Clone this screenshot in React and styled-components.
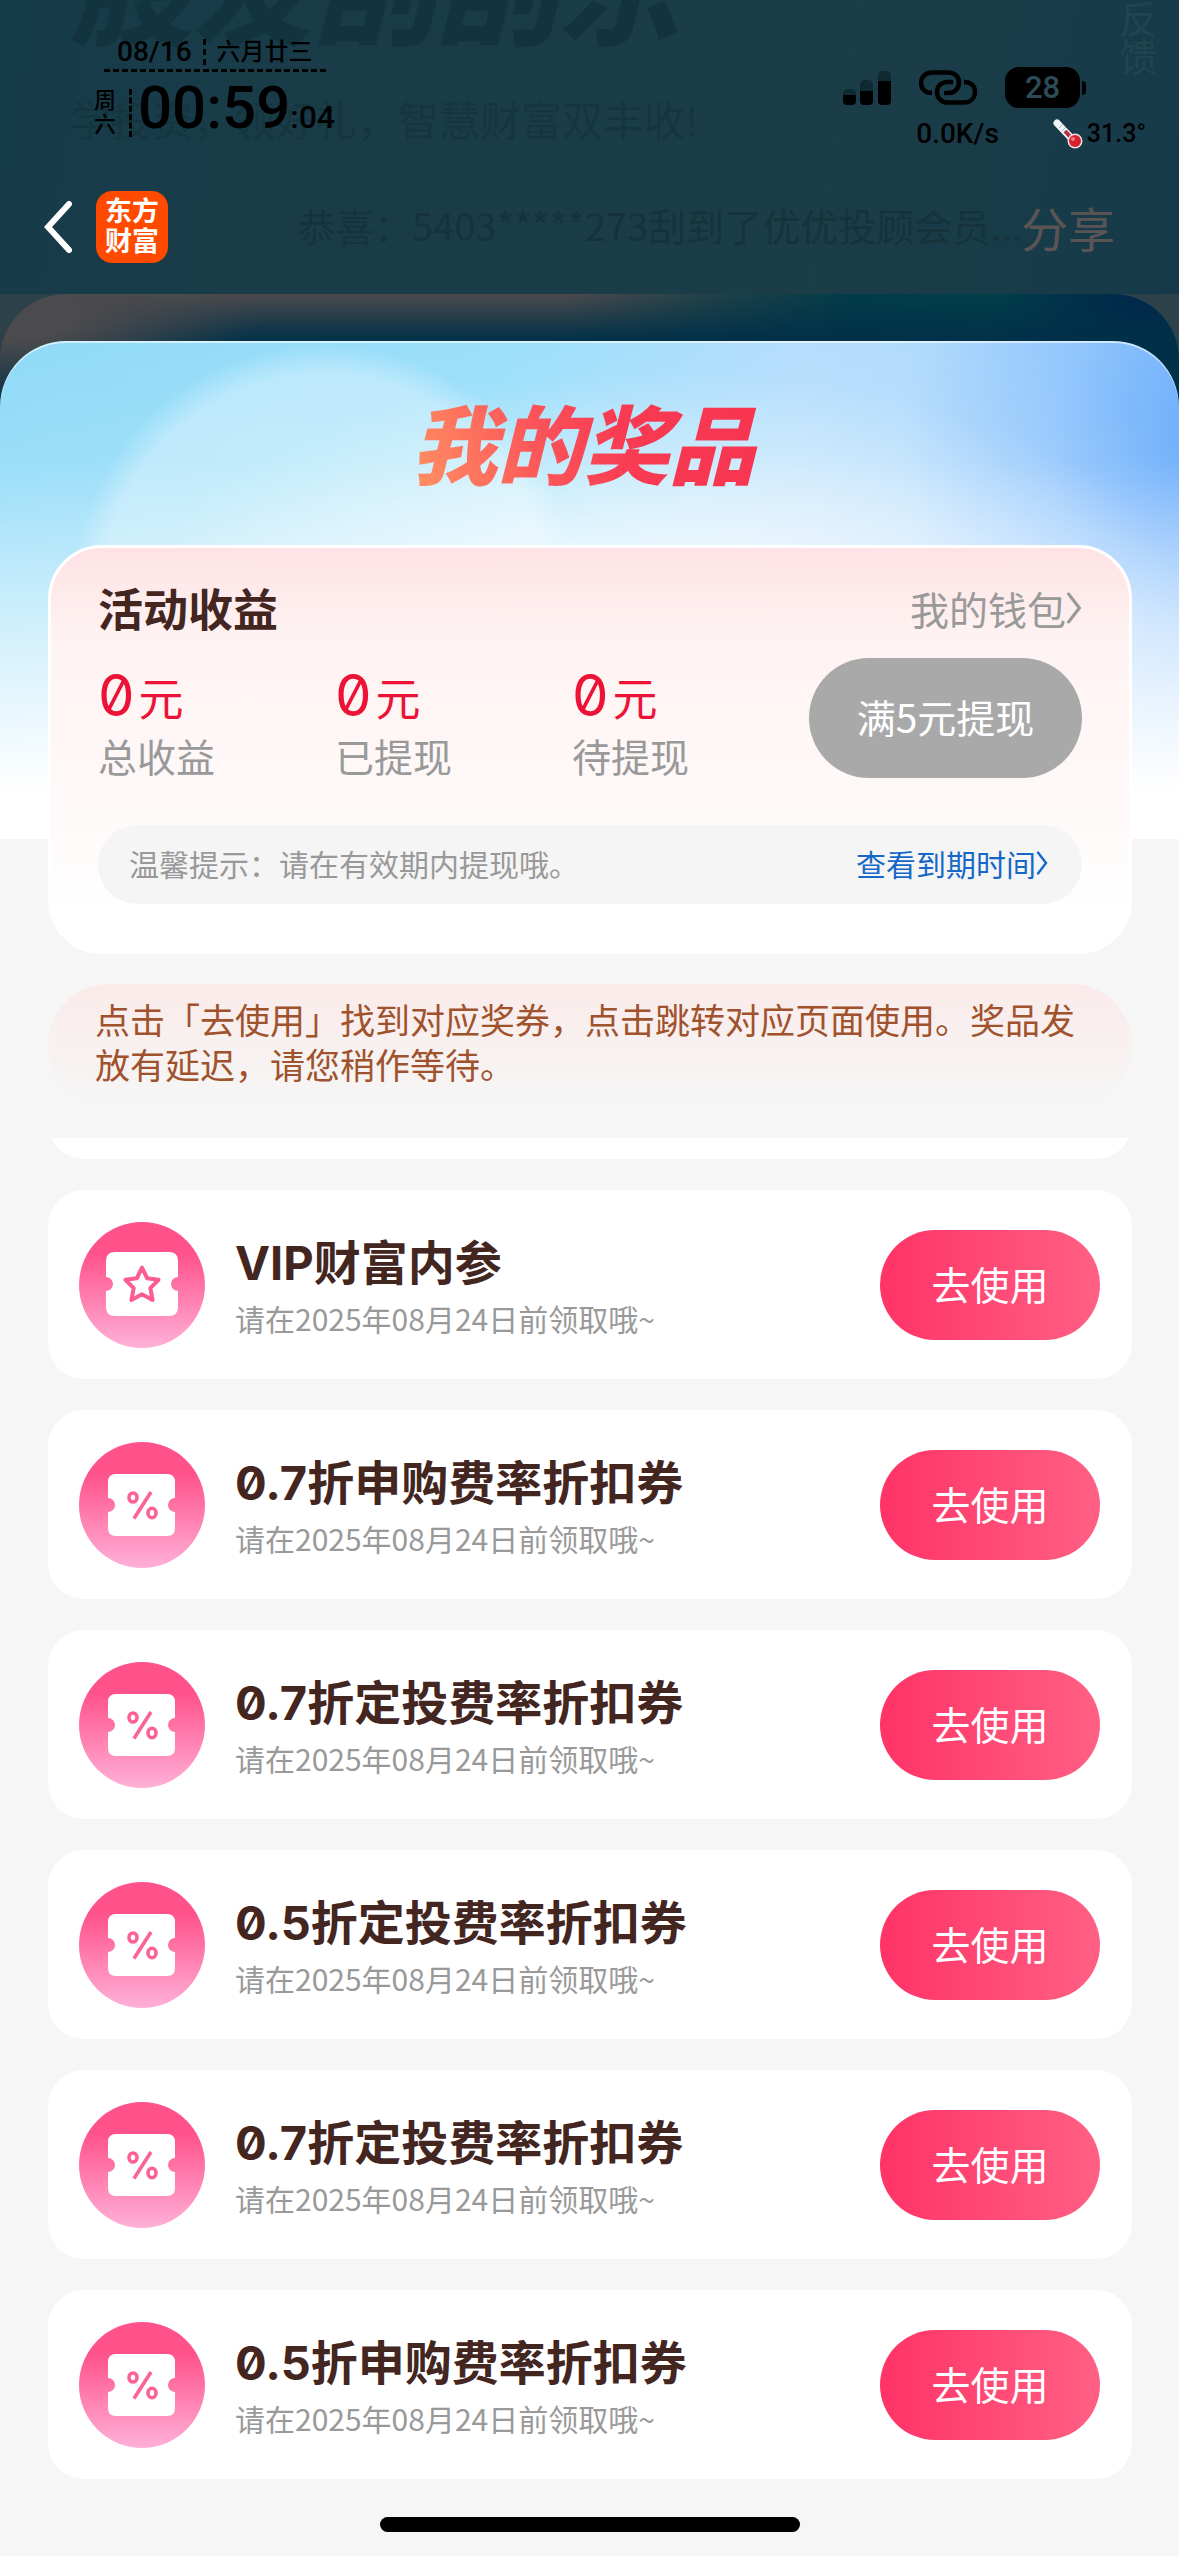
import React from 'react'
import styled, { createGlobalStyle } from 'styled-components'

const GlobalStyle = createGlobalStyle`
  * {
    box-sizing: border-box;
  }

  body {
    margin: 0;
    background: #f6f6f6;
    font-family: 'Noto Sans CJK SC', sans-serif;
  }

  h1, h2, h3, p, ul, dl, dd {
    margin: 0;
    padding: 0;
  }

  button {
    border: 0;
    padding: 0;
    font-family: inherit;
    cursor: pointer;
  }

  a {
    color: inherit;
    text-decoration: none;
  }
`

const Page = styled.div`
  background: #2c414a;
`

const Header = styled.header`
  display: grid;
  height: 294px;
  overflow: hidden;
  background: linear-gradient(100deg, #163b4a 0%, #1a3c48 30%, #1b3d48 70%, #163a4a 100%);
`

const Backdrop = styled.div`
  grid-area: 1 / 1;
  display: flex;
  justify-content: space-between;
  min-width: 0;
  padding: 0 22px 0 70px;
`

const BackdropTitle = styled.p`
  margin: -78px 0 0;
  font-size: 122px;
  line-height: 122px;
  font-weight: 900;
  font-style: italic;
  color: #13343f;
`

const BackdropSlogan = styled.p`
  margin-top: 54px;
  font-size: 41px;
  line-height: 41px;
  color: #16363f;
`

const BackdropNews = styled.p`
  margin: 64px 0 0 228px;
  font-size: 38px;
  line-height: 44px;
  white-space: nowrap;
  color: #16333c;
`

const Feedback = styled.span`
  writing-mode: vertical-rl;
  font-size: 38px;
  line-height: 38px;
  color: #21454f;
`

const Bars = styled.div`
  grid-area: 1 / 1;
  z-index: 1;
  display: flex;
  flex-direction: column;
  gap: 38px;
  padding: 34px 33px 0 44px;
`

const StatusBar = styled.div`
  display: flex;
  justify-content: space-between;
  height: 119px;
  padding-left: 50px;
  font-family: Roboto, 'Noto Sans CJK SC', sans-serif;
  font-weight: 500;
  color: #000;
`

const DateLine = styled.div`
  display: flex;
  align-items: center;
  gap: 11px;
  width: 222px;
  height: 38px;
  margin-left: 10px;
  padding-left: 13px;
  border-bottom: 3px dashed #000;
  font-size: 28px;
  line-height: 32px;
`

const Lunar = styled.span`
  padding-left: 11px;
  border-left: 3px dashed #000;
  font-size: 24px;
  line-height: 26px;
`

const ClockLine = styled.div`
  display: flex;
  align-items: center;
  gap: 6px;
  margin-top: 9px;
`

const Weekday = styled.span`
  width: 38px;
  padding-right: 14px;
  border-right: 3px dashed #000;
  font-size: 22px;
  line-height: 24px;
`

const Clock = styled.span`
  font-size: 60px;
  line-height: 54px;
  font-weight: 500;
`

const Seconds = styled.span`
  font-size: 32px;
`

const Indicators = styled.div`
  display: flex;
  flex-direction: column;
  align-items: flex-end;
  gap: 10px;
  padding-top: 33px;
`

const IndicatorRow = styled.div`
  display: flex;
  align-items: center;
  gap: ${props => props.$gap};
  padding-right: ${props => props.$inset || 0};
  font-size: 28px;
  line-height: 32px;
`

const Battery = styled.span`
  width: 75px;
  height: 41px;
  border-radius: 14px;
  background: #000;
  font-size: 31px;
  line-height: 41px;
  text-align: center;
  color: #2c4c57;
`

const BatteryTip = styled.span`
  width: 4px;
  height: 14px;
  margin-left: -26px;
  border-radius: 0 4px 4px 0;
  background: #000;
`

const Temperature = styled.span`
  display: flex;
  align-items: center;
  gap: 4px;
  font-size: 25px;
`

const NavBar = styled.nav`
  display: flex;
  align-items: center;
  height: 72px;
`

const BackButton = styled.button`
  display: flex;
  background: none;
`

const Logo = styled.span`
  display: grid;
  place-items: center;
  width: 72px;
  height: 72px;
  margin-left: 24px;
  border-radius: 16px;
  background: #ff4a00;
  font-size: 27px;
  line-height: 30px;
  font-weight: 700;
  color: #fff;
`

const LogoText = styled.span`
  width: 54px;
  padding-bottom: 4px;
`

const ShareButton = styled.button`
  margin: 0 31px 0 auto;
  background: none;
  font-size: 47px;
  line-height: 70px;
  color: #5b5454;
`

const Peek = styled.div`
  padding-top: 47px;
  border-radius: 66px 66px 0 0;
  background:
    radial-gradient(ellipse 260px 90px at 0 20px, #4b4a4c 30%, rgba(75, 74, 76, 0) 100%),
    linear-gradient(to bottom, rgba(0, 48, 72, 0) 0, rgba(0, 48, 72, .95) 44px),
    linear-gradient(to right, #4b4a4c 0%, #4b4a4c 48%, #1c4049 62%, #023c48 72%, #023f49 84%, #00284a 96%);
`

const Sheet = styled.main`
  display: flex;
  flex-direction: column;
  padding: 0 47px 24px 48px;
  border-radius: 66px 66px 0 0;
  box-shadow: inset 0 2px 0 rgba(255, 255, 255, .6);
  background:
    linear-gradient(to bottom, rgba(255, 255, 255, 0) 0, rgba(255, 255, 255, .1) 120px, rgba(255, 255, 255, .6) 290px, #fff 450px) 0 0 / 100% 498px no-repeat,
    radial-gradient(ellipse 520px 230px at 56% 260px, rgba(255, 255, 255, .8) 0, rgba(255, 255, 255, 0) 100%) 0 0 / 100% 498px no-repeat,
    radial-gradient(circle at 324px 255px, rgba(255, 255, 255, .36) 0, rgba(255, 255, 255, .34) 222px, rgba(255, 255, 255, 0) 252px) 0 0 / 100% 498px no-repeat,
    radial-gradient(ellipse 300px 360px at 102% 110px, #5fa5fb 0, rgba(110, 175, 252, .45) 50%, rgba(130, 190, 252, 0) 100%) 0 0 / 100% 498px no-repeat,
    linear-gradient(to right, #8fdaf8 0, #9bdffa 42%, #b5defc 68%, #a9d5fc 100%) 0 0 / 100% 498px no-repeat,
    #f6f6f6;
`

const SheetTitle = styled.h1`
  align-self: center;
  margin-top: 52px;
  padding: 0 14px 0 0;
  background: linear-gradient(70deg, #ff8a62 5%, #fb5058 40%, #f83a52 60%, #f73450 100%);
  background-clip: text;
  -webkit-background-clip: text;
  font-size: 86px;
  line-height: 96px;
  font-weight: 900;
  font-style: italic;
  color: transparent;
`

const IncomeCard = styled.section`
  margin-top: 56px;
  padding: 32px 47px 47px;
  border: 3px solid #fff;
  border-radius: 54px;
  background: linear-gradient(to bottom, #fee2e5 0, #fef3f2 90px, #fffafa 280px, #fff 360px);
`

const CardHead = styled.div`
  display: flex;
  justify-content: space-between;
  align-items: center;
`

const CardTitle = styled.h2`
  font-size: 45px;
  line-height: 52px;
  font-weight: 700;
  color: #43261f;
`

const ArrowLink = styled.a`
  display: flex;
  align-items: center;
  font-size: ${props => props.$size};
  color: ${props => props.$color};
`

const Figures = styled.div`
  display: flex;
  justify-content: space-between;
  margin-top: 22px;
`

const FigureList = styled.dl`
  display: grid;
  grid-template-columns: repeat(3, 237px);
  padding-top: 8px;
`

const Figure = styled.div`
  display: flex;
  flex-direction: column-reverse;
  justify-content: flex-end;
`

const FigureLabel = styled.dt`
  font-size: 39px;
  line-height: 54px;
  color: #999;
`

const FigureValue = styled.dd`
  height: 62px;
  font-family: Inter, 'Noto Sans CJK SC', sans-serif;
  font-feature-settings: 'zero';
  font-size: 58px;
  line-height: 58px;
  font-weight: 400;
  color: #ec1337;
`

const Unit = styled.span`
  padding-left: 4px;
  font-size: 45px;
`

const WithdrawButton = styled.button`
  width: 274px;
  height: 120px;
  border-radius: 60px;
  background: #a9a9a9;
  font-size: 39px;
  color: #fff;
`

const ButtonLabel = styled.span`
  display: block;
  padding-bottom: 4px;
`

const Hint = styled.div`
  display: flex;
  justify-content: space-between;
  align-items: center;
  height: 79px;
  margin-top: 43px;
  padding: 0 34px 4px 31px;
  border-radius: 40px;
  background: #f5f5f5;
  font-size: 30px;
  color: #999;
`

const Notice = styled.p`
  margin-top: 30px;
  min-height: 122px;
  padding: 12px 47px 20px;
  border-radius: 61px;
  background: linear-gradient(to bottom, #faebea, #f6f6f6);
  font-size: 35px;
  line-height: 45px;
  color: #a0522d;
`

const PrizeList = styled.ul`
  display: flex;
  flex-direction: column;
  gap: 31px;
  margin-top: 32px;
  overflow: hidden;
  list-style: none;
`

const PrizeItem = styled.li`
  display: flex;
  align-items: center;
  height: 189px;
  padding: 0 32px 0 31px;
  border-radius: 36px;
  background: #fff;

  &:first-child {
    margin-top: -168px;
  }
`

const PrizeText = styled.div`
  flex: 1;
  padding: 8px 0 0 30px;
`

const PrizeName = styled.h3`
  font-family: Inter, 'Noto Sans CJK SC', sans-serif;
  font-feature-settings: 'zero';
  font-size: 47px;
  line-height: 58px;
  font-weight: 700;
  color: #43261f;
`

const PrizeDate = styled.p`
  font-size: 30px;
  line-height: 52px;
  color: #999;
`

const UseButton = styled.button`
  width: 220px;
  height: 110px;
  border-radius: 55px;
  background: linear-gradient(to right, #ff3366, #ff6084);
  font-size: 39px;
  color: #fff;
`

const HomeIndicator = styled.div`
  align-self: center;
  width: 420px;
  height: 15px;
  margin-top: 38px;
  border-radius: 8px;
  background: #000;
`

const SignalIcon = () => (
  <svg width="48" height="36" viewBox="0 0 48 36">
    <g fill="#0f2a33">
      <rect x="0" y="19" width="13" height="16" rx="5" />
      <rect x="17" y="10" width="13" height="25" rx="5" />
      <rect x="35" y="1" width="13" height="34" rx="5" />
    </g>
    <path d="M0 25h13v6q0 4-4 4H4q-4 0-4-4zM17 21h13v10q0 4-4 4h-5q-4 0-4-4zM35 11h13v20q0 4-4 4h-5q-4 0-4-4z" />
  </svg>
)

const ChainIcon = () => (
  <svg width="58" height="35" viewBox="0 0 58 35" fill="none" stroke="#000" strokeWidth="4.5">
    <path d="M13 23C6 23 2 18.500 2 13S6 2.500 13 2.500H29C36 2.500 40 7 40 12.500S36 23 29 23H25" />
    <path d="M34 12H29C22 12 18 16.500 18 22S22 32.500 29 32.500H45C52 32.500 56 28 56 22S52 12 45 12" />
  </svg>
)

const ThermometerIcon = () => (
  <svg width="30" height="30" viewBox="0 0 30 30">
    <path d="M4 4L21 22" stroke="#f2f6f8" strokeWidth="7" strokeLinecap="round" />
    <path d="M12 12L21 22" stroke="#b3303c" strokeWidth="4" />
    <path d="M6 9l4-4M9 12l4-4" stroke="#9fb3bd" strokeWidth="1" />
    <circle cx="22" cy="22" r="7.500" fill="#f2dfe2" />
    <circle cx="22" cy="22" r="6" fill="#d6212f" />
    <circle cx="20" cy="20" r="2" fill="#f27a80" />
  </svg>
)

const BackIcon = () => (
  <svg width="28" height="52" viewBox="0 0 28 52" fill="none" stroke="#fff" strokeWidth="6" strokeLinecap="round">
    <path d="M25 3L4 26L25 49" />
  </svg>
)

const ChevronIcon = ({ width, height }) => (
  <svg width={width} height={height} viewBox="0 0 14 30" fill="none" stroke="currentColor" strokeWidth="3" strokeLinecap="round">
    <path d="M2 2L12 15L2 28" />
  </svg>
)

const PrizeIcon = ({ type }) => (
  <svg width="126" height="126" viewBox="0 0 126 126" fill="none">
    <defs>
      <linearGradient id={`badge-${type}`} x1="0" y1="0" x2="0" y2="1">
        <stop offset=".25" stopColor="#ff528b" />
        <stop offset="1" stopColor="#ffb0d8" />
      </linearGradient>
    </defs>
    <circle cx="63" cy="63" r="63" fill={`url(#badge-${type})`} />
    {type === 'star' ? (
      <>
        <path
          d="M36 30H90Q99 30 99 39V55A7 7 0 0 0 99 69V85Q99 94 90 94H36Q27 94 27 85V69A7 7 0 0 0 27 55V39Q27 30 36 30Z"
          fill="#fff"
        />
        <path
          d="M63 45.500L68.200 56.300L79.500 57.800L71.300 66.200L73.600 78L63 72.300L52.400 78L54.700 66.200L46.500 57.800L57.800 56.300Z"
          stroke="#fd5c93"
          strokeWidth="4"
          strokeLinejoin="round"
        />
      </>
    ) : (
      <>
        <path
          d="M37 32H88Q96 32 96 40V56A7 7 0 0 0 96 70V86Q96 94 88 94H37Q29 94 29 86V70A7 7 0 0 0 29 56V40Q29 32 37 32Z"
          fill="#fff"
        />
        <g stroke="#fb6397" strokeWidth="3.6">
          <ellipse cx="54" cy="55.500" rx="4" ry="4.500" />
          <ellipse cx="73" cy="71" rx="4" ry="4.800" />
          <path d="M72 50L55 76.500" />
        </g>
      </>
    )}
  </svg>
)

const figures = ['总收益', '已提现', '待提现']

const prizes = [
  { name: 'VIP财富内参', type: 'star' },
  { name: '0.7折申购费率折扣券', type: 'percent' },
  { name: '0.7折定投费率折扣券', type: 'percent' },
  { name: '0.5折定投费率折扣券', type: 'percent' },
  { name: '0.7折定投费率折扣券', type: 'percent' },
  { name: '0.5折申购费率折扣券', type: 'percent' },
]

export default function App() {
  return (
    <Page>
      <GlobalStyle />
      <Header>
        <Backdrop>
          <div>
            <BackdropTitle>股友刮刮乐</BackdropTitle>
            <BackdropSlogan>学投资，领好礼，智慧财富双丰收!</BackdropSlogan>
            <BackdropNews>恭喜：5403*****273刮到了优优投顾会员...</BackdropNews>
          </div>
          <Feedback>反馈</Feedback>
        </Backdrop>
        <Bars>
          <StatusBar>
            <div>
              <DateLine>
                08/16
                <Lunar>六月廿三</Lunar>
              </DateLine>
              <ClockLine>
                <Weekday>周六</Weekday>
                <Clock>00:59<Seconds>:04</Seconds></Clock>
              </ClockLine>
            </div>
            <Indicators>
              <IndicatorRow $gap="28px" $inset="60px">
                <SignalIcon />
                <ChainIcon />
                <Battery>28</Battery>
                <BatteryTip />
              </IndicatorRow>
              <IndicatorRow $gap="54px">
                <span>0.0K/s</span>
                <Temperature>
                  <ThermometerIcon />
                  31.3°
                </Temperature>
              </IndicatorRow>
            </Indicators>
          </StatusBar>
          <NavBar>
            <BackButton aria-label="返回"><BackIcon /></BackButton>
            <Logo><LogoText>东方财富</LogoText></Logo>
            <ShareButton>分享</ShareButton>
          </NavBar>
        </Bars>
      </Header>

      <Peek>
        <Sheet>
          <SheetTitle>我的奖品</SheetTitle>

          <IncomeCard>
            <CardHead>
              <CardTitle>活动收益</CardTitle>
              <ArrowLink href="#wallet" $size="39px" $color="#999">
                我的钱包
                <ChevronIcon width="16" height="32" />
              </ArrowLink>
            </CardHead>
            <Figures>
              <FigureList>
                {figures.map(label => (
                  <Figure key={label}>
                    <FigureLabel>{label}</FigureLabel>
                    <FigureValue>0<Unit>元</Unit></FigureValue>
                  </Figure>
                ))}
              </FigureList>
              <WithdrawButton><ButtonLabel>满5元提现</ButtonLabel></WithdrawButton>
            </Figures>
            <Hint>
              <span>温馨提示：请在有效期内提现哦。</span>
              <ArrowLink href="#expiry" $size="30px" $color="#1668c8">
                查看到期时间
                <ChevronIcon width="12" height="24" />
              </ArrowLink>
            </Hint>
          </IncomeCard>

          <Notice>点击「去使用」找到对应奖券，点击跳转对应页面使用。奖品发放有延迟，请您稍作等待。</Notice>

          <PrizeList>
            <PrizeItem />
            {prizes.map((prize, i) => (
              <PrizeItem key={i}>
                <PrizeIcon type={prize.type} />
                <PrizeText>
                  <PrizeName>{prize.name}</PrizeName>
                  <PrizeDate>请在2025年08月24日前领取哦~</PrizeDate>
                </PrizeText>
                <UseButton><ButtonLabel>去使用</ButtonLabel></UseButton>
              </PrizeItem>
            ))}
          </PrizeList>

          <HomeIndicator />
        </Sheet>
      </Peek>
    </Page>
  )
}
